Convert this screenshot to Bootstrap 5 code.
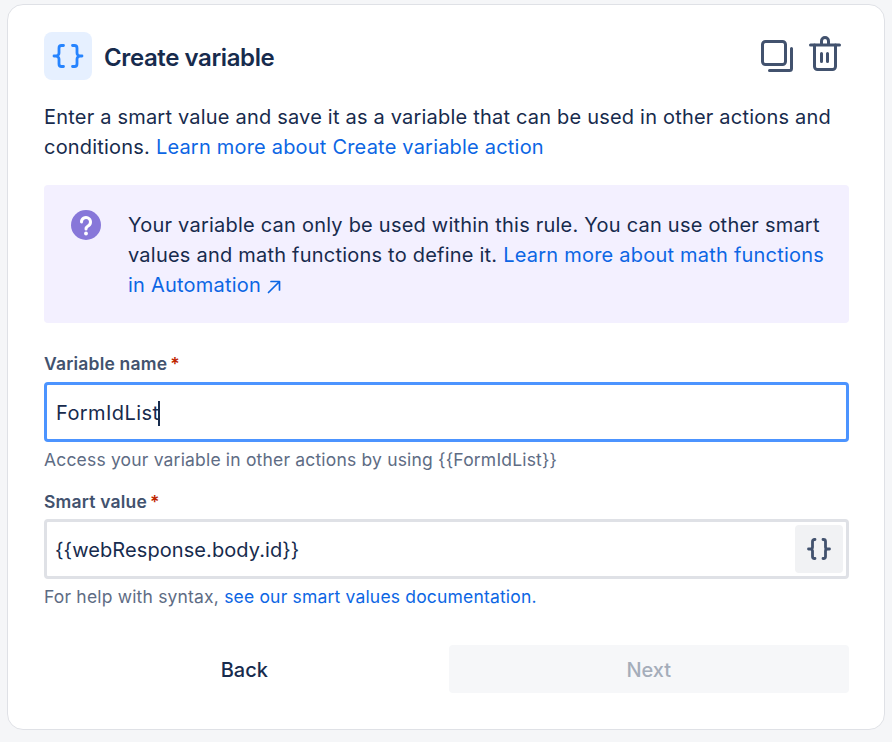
<!DOCTYPE html>
<html lang="en">
<head>
<meta charset="utf-8">
<title>Create variable</title>
<link href="https://cdn.jsdelivr.net/npm/bootstrap@5.3.0/dist/css/bootstrap.min.css" rel="stylesheet">
<style>
html,body{height:742px;overflow:hidden}
body{background:#f5f6f8;font-family:Inter,"Liberation Sans",sans-serif;color:#172b4d;font-size:20px;line-height:30px;letter-spacing:.2px;padding:4px 7px 0}
a{color:#0c66e4;text-decoration:none}
.panel{width:878px;height:726px;background:#fff;border:1px solid #dfe1e6;border-radius:16px;padding:27px 35px 0 36px}
.head-tile{width:48px;height:48px;border-radius:8px;background:#e6f0ff}
.head-title{font-size:24px;font-weight:600;line-height:32px;letter-spacing:-.4px;margin:3px 0 0 12px;color:#172b4d}
.head-acts{margin-right:8px;gap:15px}
.intro{margin:22px 0 23px}
.note{background:#f3f0ff;border-radius:4px;height:138px;padding:25px 20px 0 27px;margin-bottom:29px;letter-spacing:.22px}
.note-icon{width:30px;height:30px;margin:0 27px 0 0;flex:none}
.fld-label{display:block;font-size:17.5px;font-weight:600;line-height:24px;letter-spacing:.2px;color:#42526e;margin-bottom:6px}
.req{color:#bf2600;margin-left:3px}
.entry{height:60px;border:3px solid #dfe1e6;border-radius:4px;padding:0 3px 0 9px;font-size:20px}
.entry>span{margin-top:2px}
.entry.on{border-color:#4c94ff;letter-spacing:.42px}
.entry.plain{letter-spacing:.08px;padding-left:8px}
.caret-bar{display:inline-block;width:2px;height:25px;background:#172b4d;vertical-align:-6px;margin-left:-1px}
.brace-btn{width:48px;height:48px;background:#f1f2f4;border-radius:4px;border:0;padding:0}
.hint{font-size:17.5px;line-height:24px;letter-spacing:.18px;color:#5e6c84;margin:6px 0 18px}
.fld-label.second{margin-bottom:5px}
.foot{gap:4px;margin-top:36px}
.act{flex:1 1 0;height:48px;border:0;border-radius:4px;font-size:20px;font-weight:500;background:transparent;color:#172b4d;padding:2px 0 0}
.act:disabled{background:#f6f7f9;color:#a5adba;opacity:1}
</style>
</head>
<body>
<div class="panel">
  <div class="d-flex align-items-center">
    <div class="head-tile d-flex">
      <svg width="48" height="48" viewBox="0 0 48 48" fill="none" stroke="#2684ff" stroke-width="2.800" stroke-linecap="round" stroke-linejoin="round"><path d="M19.500 13.500h-2a2.500 2.500 0 0 0-2.500 2.500v5a3 3 0 0 1-3 3h-2h2a3 3 0 0 1 3 3v5a2.500 2.500 0 0 0 2.500 2.500h2"/><path d="M28.500 13.500h2a2.500 2.500 0 0 1 2.500 2.500v5a3 3 0 0 0 3 3h2h-2a3 3 0 0 0-3 3v5a2.500 2.500 0 0 1-2.500 2.500h-2"/></svg>
    </div>
    <h1 class="head-title">Create variable</h1>
    <div class="head-acts d-flex align-items-center ms-auto">
      <svg width="33" height="36" viewBox="0 0 33 36" fill="none" stroke="#42526e" stroke-width="3" stroke-linecap="round" stroke-linejoin="round"><rect x="1.500" y="3.500" width="23" height="23" rx="3"/><path d="M30.500 10.500v20a2 2 0 0 1-2 2H8.500"/></svg>
      <svg width="32" height="40" viewBox="0 0 32 40" fill="none" stroke="#42526e" stroke-width="3" stroke-linecap="round" stroke-linejoin="round"><path d="M1.500 9h29"/><path d="M12.500 8V5a3.500 3.500 0 0 1 7 0v3"/><path d="M5.500 9v21.500a3 3 0 0 0 3 3h15a3 3 0 0 0 3-3V9"/><path d="M12.500 17.500v8M18.500 17.500v8"/></svg>
    </div>
  </div>
  <p class="intro">Enter a smart value and save it as a variable that can be used in other actions and conditions. <a href="#">Learn more about Create variable action</a></p>
  <div class="note d-flex align-items-start">
    <svg class="note-icon" viewBox="0 0 30 30"><circle cx="15" cy="15" r="15" fill="#8777d9"/><path d="M10.500 12a4.500 4.500 0 1 1 7 3.700c-1.500 1-2.500 1.600-2.500 3.300" fill="none" stroke="#fff" stroke-width="3" stroke-linecap="round"/><circle cx="15" cy="23.500" r="1.900" fill="#fff"/></svg>
    <div>Your variable can only be used within this rule. You can use other smart values and math functions to define it. <a href="#">Learn more about math functions in Automation <svg width="14" height="14" viewBox="0 0 14 14" fill="none" stroke="#0c66e4" stroke-width="1.700" stroke-linecap="round" stroke-linejoin="round"><path d="M1.500 12.500 12 2M4 1.500h8.500V10"/></svg></a></div>
  </div>
  <label class="fld-label">Variable name<span class="req">*</span></label>
  <div class="entry on d-flex align-items-center"><span>FormIdList<span class="caret-bar"></span></span></div>
  <p class="hint">Access your variable in other actions by using {{FormIdList}}</p>
  <label class="fld-label second">Smart value<span class="req">*</span></label>
  <div class="entry plain d-flex align-items-center justify-content-between">
    <span>{{webResponse.body.id}}</span>
    <button class="brace-btn d-flex align-items-center justify-content-center" type="button" aria-label="Insert smart value">
      <svg width="26" height="24" viewBox="0 0 26 24" fill="none" stroke="#42526e" stroke-width="2.800" stroke-linecap="round" stroke-linejoin="round"><path d="M9 2.500H8.500a2 2 0 0 0-2 2V10a2 2 0 0 1-2 2h-2h2a2 2 0 0 1 2 2v5.500a2 2 0 0 0 2 2H9"/><path d="M17 2.500h.5a2 2 0 0 1 2 2V10a2 2 0 0 0 2 2h2h-2a2 2 0 0 0-2 2v5.500a2 2 0 0 1-2 2H17"/></svg>
    </button>
  </div>
  <p class="hint">For help with syntax, <a href="#">see our smart values documentation.</a></p>
  <div class="foot d-flex">
    <button class="act" type="button">Back</button>
    <button class="act" type="button" disabled>Next</button>
  </div>
</div>
<script src="https://cdn.jsdelivr.net/npm/bootstrap@5.3.0/dist/js/bootstrap.bundle.min.js"></script>
</body>
</html>
